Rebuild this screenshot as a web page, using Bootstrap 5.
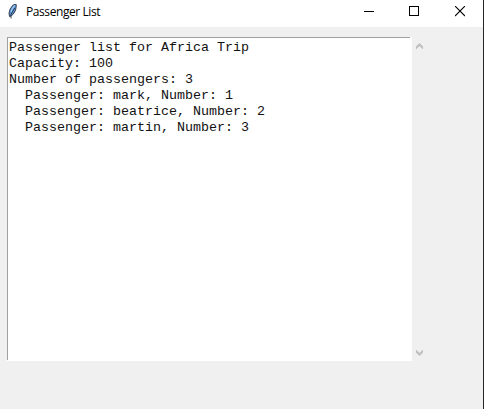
<!DOCTYPE html>
<html lang="en">
<head>
<meta charset="utf-8">
<title>Passenger List</title>
<link href="https://cdn.jsdelivr.net/npm/bootstrap@5.3.0/dist/css/bootstrap.min.css" rel="stylesheet">
<style>
body { background: #f0f0f0; }
.app-window { height: 409px; border-right: 1px solid #252525; }
.title-bar { height: 27px; flex: none; padding-left: 5px; }
.title-text { font: 12px/24px "Open Sans", "Noto Sans", sans-serif; letter-spacing: -.42px; padding-left: 5px; height: 27px; color: #000; }
.win-btn { width: 46px; height: 23px; }
.btn-min { width: 45px; }
.win-btn:focus-visible { outline: 1px solid #777; }
.client-area { padding: 10px 0 0 7px; }
.text-pane { width: 405px; height: 324px; padding: 0 2px 1px 0; }
.text-pane pre { height: 323px; border: solid #a0a0a0; border-width: 1px 0 0 1px; font: 13.333px/16px "Liberation Mono", monospace; padding: 2px 0 0 1px; color: #111; }
.scroll-track { width: 16px; height: 324px; padding: 5px 0 4px; }
svg { display: block; }
</style>
</head>
<body class="overflow-hidden">
<div class="app-window d-flex flex-column">
  <header class="title-bar bg-white d-flex">
    <svg class="mt-1" width="16" height="16" viewBox="0 0 16 16" aria-hidden="true">
      <path d="M4.5 12.5 4 9 5.2 4.8 7.9 1.2 10.9 -.2 11.3 2 10.6 6 8.6 9.8 6.1 12Z" fill="#5b95d6" stroke="#17202c" stroke-width=".8"/>
      <path d="M6 8 7.2 5 9.7 1.4" fill="none" stroke="#9acbf5" stroke-width="1.3"/>
      <path d="M6 14.5 6 10.5 9.6 4" fill="none" stroke="#182330" stroke-width=".8"/>
    </svg>
    <div class="title-text me-auto">Passenger List</div>
    <button class="win-btn btn-min btn p-0 border-0 rounded-0 d-flex align-items-center justify-content-center" aria-label="Minimize"><svg width="11" height="11" shape-rendering="crispEdges"><path d="M1 5.5H11" stroke="#000"/></svg></button>
    <button class="win-btn btn p-0 border-0 rounded-0 d-flex align-items-center justify-content-center" aria-label="Maximize"><svg width="10" height="11" shape-rendering="crispEdges"><path d="M.5.5h9v9h-9z" fill="none" stroke="#000"/></svg></button>
    <button class="win-btn btn p-0 border-0 rounded-0 d-flex align-items-center justify-content-center" aria-label="Close"><svg width="10" height="11"><path d="M0 0 10 10M10 0 0 10" stroke="#000" stroke-width="1.1"/></svg></button>
  </header>
  <main class="client-area d-flex">
    <div class="text-pane bg-white"><pre class="m-0 overflow-hidden">Passenger list for Africa Trip
Capacity: 100
Number of passengers: 3
  Passenger: mark, Number: 1
  Passenger: beatrice, Number: 2
  Passenger: martin, Number: 3</pre></div>
    <div class="scroll-track d-flex flex-column align-items-center justify-content-between">
      <svg width="8" height="7"><path d="M0 4.5 3.5 1 7 4.5V7H6.5L3.5 4 .5 7H0Z" fill="#bfbfbf"/></svg>
      <svg width="8" height="7"><path d="M0 0H.5L3.5 3 6.5 0H7V2.5L3.5 6 0 2.5Z" fill="#bfbfbf"/></svg>
    </div>
  </main>
</div>
<script src="https://cdn.jsdelivr.net/npm/bootstrap@5.3.0/dist/js/bootstrap.bundle.min.js"></script>
</body>
</html>
